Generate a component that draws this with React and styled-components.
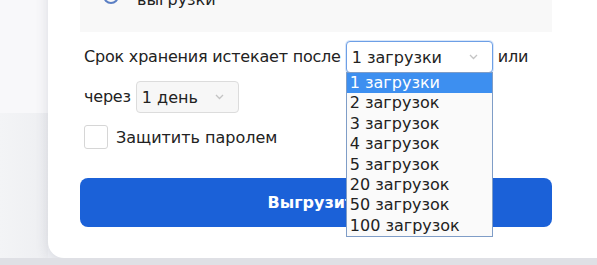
import React from 'react'
import styled, { createGlobalStyle } from 'styled-components'

const GlobalStyle = createGlobalStyle`
  html, body {
    margin: 0;
    padding: 0;
    overflow: hidden;
    background: #f2f3f6;
  }
  body {
    font-family: "DejaVu Sans", Verdana, sans-serif;
    color: #222;
  }
`

const uploadOptions = ['1 загрузки', '2 загрузок', '3 загрузок', '4 загрузок', '5 загрузок', '20 загрузок', '50 загрузок', '100 загрузок']

function Chevron() {
  return (
    <svg width="9" height="6" viewBox="0 0 9 6">
      <path d="M1 1l3.5 3.5L8 1" fill="none" stroke="#c4c4c4" strokeWidth="1.3" />
    </svg>
  )
}

function App() {
  return (
    <>
      <GlobalStyle />
      <Page>
        <Main>
          <Side>
            <SideTop />
            <SideBottom />
          </Side>
          <Card>
            <InfoBox>
              <Radio />
              <InfoLabel>Время хранения<br />выгрузки</InfoLabel>
              <InfoValue>75B</InfoValue>
            </InfoBox>
            <Sentence>
              <Words>Срок хранения истекает после</Words>
              <SelectWrap>
                <Select $focused $width={147}>
                  <span>1 загрузки</span>
                  <Chevron />
                </Select>
                <OptionList>
                  {uploadOptions.map((o, i) => (
                    <Option key={o} $active={i === 0}>{o}</Option>
                  ))}
                </OptionList>
              </SelectWrap>
              <Words>или</Words>
              <Words>через</Words>
              <SelectWrap>
                <Select $width={103}>
                  <span>1 день</span>
                  <Chevron />
                </Select>
              </SelectWrap>
            </Sentence>
            <CheckRow>
              <CheckBox />
              <span>Защитить паролем</span>
            </CheckRow>
            <SubmitButton>Выгрузить</SubmitButton>
          </Card>
        </Main>
        <Footer />
      </Page>
    </>
  )
}

export default App

const Page = styled.div`
  height: 265px;
  display: flex;
  flex-direction: column;
  overflow: hidden;
`

const Main = styled.div`
  height: 258px;
  display: grid;
  grid-template-columns: 48px 1fr;
`

const Side = styled.div`
  display: flex;
  flex-direction: column;
`

const SideTop = styled.div`
  height: 113px;
  background: #f8f8fa;
`

const SideBottom = styled.div`
  flex: 1;
  background: linear-gradient(90deg, #f3f4f6 0%, #eeeff2 100%);
`

const Card = styled.div`
  width: 620px;
  margin-top: -66px;
  padding: 20px 32px 31px;
  box-sizing: border-box;
  background: #fff;
  border-radius: 0 0 16px 16px;
  box-shadow: 0 3px 14px rgba(40, 50, 80, 0.14);
  display: flex;
  flex-direction: column;
  font-size: 16px;
`

const InfoBox = styled.div`
  width: 472px;
  box-sizing: border-box;
  background: #f8f8f8;
  padding: 16px 20px 22px 23px;
  display: flex;
  align-items: flex-end;
  line-height: 20px;
`

const Radio = styled.div`
  width: 16px;
  height: 16px;
  box-sizing: border-box;
  border: 2px solid #5b7fc4;
  border-radius: 50%;
  margin: 0 18px 6px 0;
  flex-shrink: 0;
`

const InfoLabel = styled.div`
  width: 240px;
`

const InfoValue = styled.div`
  font-size: 13px;
  color: #888;
  margin-bottom: 6px;
`

const Sentence = styled.div`
  width: 472px;
  margin-top: 9px;
  padding-left: 4px;
  box-sizing: border-box;
  display: flex;
  flex-wrap: wrap;
  align-items: center;
  column-gap: 5px;
  row-gap: 8px;
`

const Words = styled.span`
  line-height: 32px;
  letter-spacing: -0.2px;
`

const SelectWrap = styled.div`
  position: relative;
`

const Select = styled.div`
  width: ${p => p.$width}px;
  height: 32px;
  box-sizing: border-box;
  padding: 0 14px 0 5px;
  display: flex;
  align-items: center;
  justify-content: space-between;
  border: 1px solid ${p => (p.$focused ? '#6d9fe6' : '#dcdcdc')};
  border-radius: 4px;
  background: ${p => (p.$focused ? '#fff' : '#f7f7f7')};
  box-shadow: ${p => (p.$focused ? '0 0 0 1px rgba(109,159,230,0.25)' : 'none')};
`

const OptionList = styled.div`
  position: absolute;
  top: 31px;
  left: 0;
  width: 147px;
  box-sizing: border-box;
  border: 1px solid #7f9dc7;
  background: #fafafa;
  z-index: 2;
`

const Option = styled.div`
  height: 20.4px;
  line-height: 20.4px;
  padding-left: 3px;
  background: ${p => (p.$active ? '#3d8ff0' : 'transparent')};
  color: ${p => (p.$active ? '#fff' : '#222')};
`

const CheckRow = styled.label`
  margin-top: 12px;
  padding-left: 4px;
  display: flex;
  align-items: center;
  gap: 8px;
`

const CheckBox = styled.span`
  width: 24px;
  height: 24px;
  box-sizing: border-box;
  border: 1px solid #d6d6d6;
  border-radius: 3px;
  background: #fff;
`

const SubmitButton = styled.button`
  width: 472px;
  height: 49px;
  margin-top: 29px;
  border: none;
  border-radius: 8px;
  background: #1b61d8;
  color: #fff;
  font-family: "DejaVu Sans", Verdana, sans-serif;
  font-weight: bold;
  font-size: 16px;
`

const Footer = styled.div`
  flex: 1;
  background: #dfe0e5;
`
